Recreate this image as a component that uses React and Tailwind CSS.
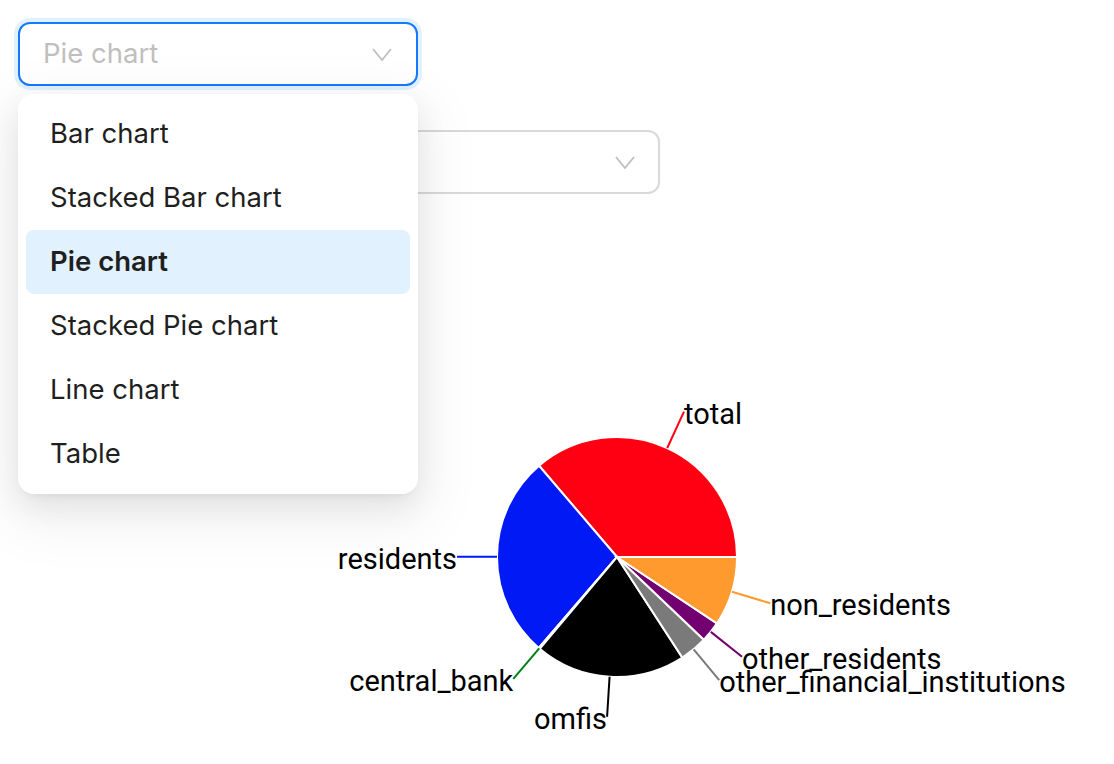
import React from 'react';

const options = ['Bar chart', 'Stacked Bar chart', 'Pie chart', 'Stacked Pie chart', 'Line chart', 'Table'];

// slices in degrees, counter-clockwise from 3 o'clock (recharts style)
const slices = [
  { name: 'total', start: 0, end: 130.5, color: '#ff0012' },
  { name: 'residents', start: 130.5, end: 229.3, color: '#0019f5' },
  { name: 'central_bank', start: 229.3, end: 229.9, color: '#007f1a' },
  { name: 'omfis', start: 229.9, end: 303, color: '#000000' },
  { name: 'other_financial_institutions', start: 303, end: 316.4, color: '#7a7a7a' },
  { name: 'other_residents', start: 316.4, end: 326.4, color: '#720070' },
  { name: 'non_residents', start: 326.4, end: 360, color: '#ff9a2e' },
];

const cx = 617;
const cy = 557;
const r = 120;

const pt = (rad, deg) => {
  const a = (deg * Math.PI) / 180;
  return [cx + rad * Math.cos(a), cy - rad * Math.sin(a)];
};

const Chevron = () => (
  <svg width="20" height="13" viewBox="0 0 20 13" fill="none">
    <path d="M1 1 L10 12 L19 1" stroke="#bfbfbf" strokeWidth="1.8" />
  </svg>
);

const PieChart = () => (
  <svg className="block" width="1114" height="570" viewBox="0 194 1114 570">
    {slices.map((s) => {
      const [x1, y1] = pt(r, s.start);
      const [x2, y2] = pt(r, s.end);
      const large = s.end - s.start > 180 ? 1 : 0;
      return (
        <path
          key={s.name}
          d={`M${cx},${cy} L${x1},${y1} A${r},${r} 0 ${large} 0 ${x2},${y2} Z`}
          fill={s.color}
          stroke="#fff"
          strokeWidth="2"
        />
      );
    })}
    {slices.map((s) => {
      const mid = (s.start + s.end) / 2;
      const [x1, y1] = pt(r, mid);
      const [x2, y2] = pt(r + 40, mid);
      const anchor = x2 > cx + 1 ? 'start' : x2 < cx - 1 ? 'end' : 'middle';
      return (
        <g key={s.name + '-label'}>
          <path d={`M${x1},${y1} L${x2},${y2}`} stroke={s.color} strokeWidth="2" fill="none" />
          <text
            x={x2}
            y={y2 + 2}
            textAnchor={anchor}
            dominantBaseline="central"
            fontSize="29"
            fill="#000"
            style={{ fontFamily: 'Roboto, "Liberation Sans", sans-serif' }}
          >
            {s.name}
          </text>
        </g>
      );
    })}
  </svg>
);

export default function App() {
  return (
    <div className="relative min-h-screen bg-white font-['Inter','Liberation_Sans',sans-serif]">
      <div className="pt-[22px] pl-[18px]">
        <div className="flex h-[64px] w-[400px] items-center justify-between rounded-[12px] border-2 border-[#1677ff] bg-white pl-[23px] pr-[24px] shadow-[0_0_0_4px_rgba(5,145,255,0.12)]">
          <span className="text-[27.5px] text-[#bfbfbf]">Pie chart</span>
          <Chevron />
        </div>
      </div>

      <div className="ml-[260px] mt-[44px]">
        <div className="flex h-[64px] w-[400px] items-center justify-end rounded-[12px] border-2 border-[#d9d9d9] bg-white pr-[23px]">
          <Chevron />
        </div>
      </div>

      <PieChart />

      <div className="absolute left-[18px] top-[94px] w-[400px] rounded-[16px] bg-white p-[8px] shadow-[0_12px_32px_0_rgba(0,0,0,0.08),0_6px_12px_-8px_rgba(0,0,0,0.12),0_18px_56px_16px_rgba(0,0,0,0.05)]">
        {options.map((o) => (
          <div
            key={o}
            className={
              o === 'Pie chart'
                ? 'flex h-[64px] items-center rounded-[8px] bg-[#e1f1fd] px-[24px] text-[27.5px] font-semibold text-[#1f1f1f]'
                : 'flex h-[64px] items-center rounded-[8px] px-[24px] text-[27.5px] text-[#1f1f1f]'
            }
          >
            {o}
          </div>
        ))}
      </div>
    </div>
  );
}
